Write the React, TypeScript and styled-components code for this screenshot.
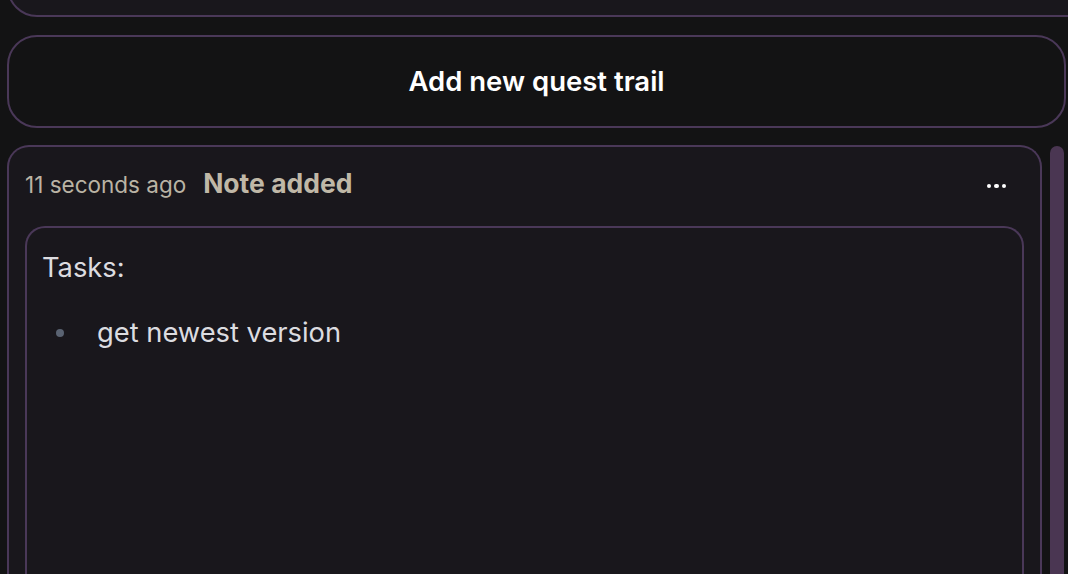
import styled, { createGlobalStyle } from "styled-components";

const GlobalStyle = createGlobalStyle`
    html, body {
        margin: 0;
        padding: 0;
        background: #131314;
        overflow: hidden;
    }
    body {
        font-family: Inter, "Noto Sans", sans-serif;
        -webkit-font-smoothing: antialiased;
    }
`;

const borderColor = "#4a3858";

const StyledPage = styled.main`
    display: flex;
    flex-direction: column;
    gap: 17.5px;
    padding: 0 2px 0 7px;
    height: 574px;
    box-sizing: border-box;
`;

const StyledPreviousCard = styled.section`
    height: 60px;
    margin-top: -43px;
    margin-right: -40px;
    flex-shrink: 0;
    background: #19171c;
    border: 2px solid ${borderColor};
    border-radius: 30px;
    box-sizing: border-box;
`;

const StyledAddButton = styled.button`
    height: 93px;
    flex-shrink: 0;
    display: flex;
    align-items: center;
    justify-content: center;
    background: #131314;
    border: 2px solid ${borderColor};
    border-radius: 30px;
    color: #ffffff;
    font-family: inherit;
    font-size: 27.5px;
    font-weight: 600;
    cursor: pointer;
`;

const StyledFeed = styled.div`
    display: flex;
    gap: 8px;
    margin-right: 2px;
    min-height: 0;
    flex: 1;
`;

const StyledNoteCard = styled.article`
    flex: 1;
    padding: 16px 16px 0 16px;
    background: #19171c;
    border: 2px solid ${borderColor};
    border-bottom: none;
    border-radius: 22px 22px 0 0;
`;

const StyledHeader = styled.header`
    display: flex;
    align-items: baseline;
    gap: 17px;
    line-height: 40px;
`;

const StyledTime = styled.span`
    font-size: 22.5px;
    color: #bab3a4;
`;

const StyledTitle = styled.h3`
    margin: 0;
    font-size: 26.5px;
    font-weight: 700;
    color: #c0b8a7;
`;

const StyledMenuButton = styled.button`
    margin: 4px 14px 0 auto;
    align-self: center;
    display: flex;
    gap: 3px;
    padding: 4px;
    background: none;
    border: none;
    cursor: pointer;
`;

const StyledDot = styled.span`
    width: 4.5px;
    height: 4.5px;
    border-radius: 50%;
    background: #ffffff;
`;

const StyledBody = styled.div`
    margin-top: 21px;
    min-height: 420px;
    padding: 20px 16px 0 15px;
    border: 2px solid ${borderColor};
    border-bottom: none;
    border-radius: 20px 20px 0 0;
    color: #dcdce0;
    font-size: 27.3px;
    line-height: 40px;
`;

const StyledParagraph = styled.p`
    margin: 0 0 25px 0;
`;

const StyledList = styled.ul`
    margin: 0;
    padding: 0;
    list-style: none;
`;

const StyledItem = styled.li`
    display: flex;
    align-items: center;
`;

const StyledBullet = styled.span`
    width: 8px;
    height: 8px;
    margin: 0 33.5px 0 13.5px;
    border-radius: 50%;
    background: #5a6372;
    flex-shrink: 0;
`;

const StyledScrollbar = styled.div`
    width: 14px;
    margin-top: 1px;
    border-radius: 7px 7px 0 0;
    background: #4a3652;
    flex-shrink: 0;
`;

export default function App() {
    return (
        <>
            <GlobalStyle />
            <StyledPage>
                <StyledPreviousCard />
                <StyledAddButton>Add new quest trail</StyledAddButton>
                <StyledFeed>
                    <StyledNoteCard>
                        <StyledHeader>
                            <StyledTime>11 seconds ago</StyledTime>
                            <StyledTitle>Note added</StyledTitle>
                            <StyledMenuButton aria-label="More">
                                <StyledDot />
                                <StyledDot />
                                <StyledDot />
                            </StyledMenuButton>
                        </StyledHeader>
                        <StyledBody>
                            <StyledParagraph>Tasks:</StyledParagraph>
                            <StyledList>
                                <StyledItem>
                                    <StyledBullet />
                                    get newest version
                                </StyledItem>
                            </StyledList>
                        </StyledBody>
                    </StyledNoteCard>
                    <StyledScrollbar />
                </StyledFeed>
            </StyledPage>
        </>
    );
}
